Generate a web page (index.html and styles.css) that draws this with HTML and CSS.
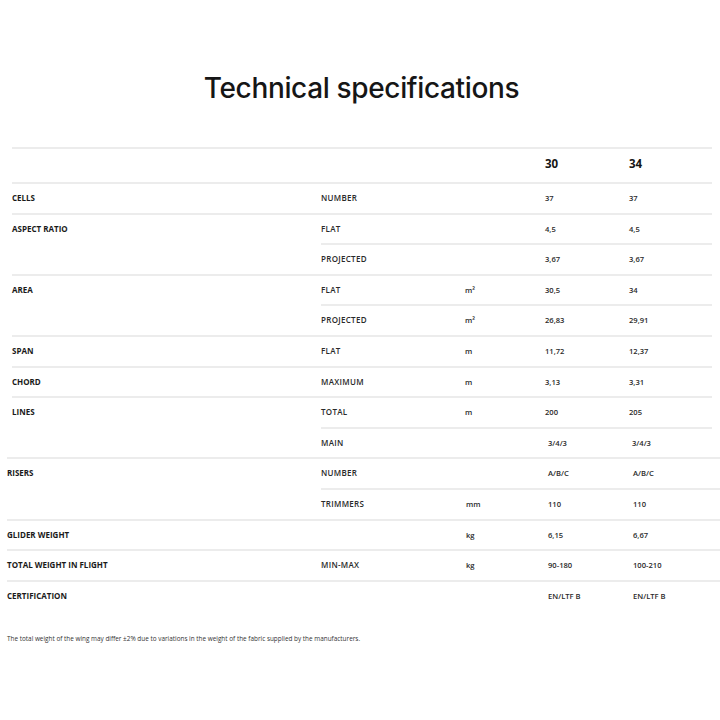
FILE: index.html
```html
<!DOCTYPE html>
<html>
<head>
<meta charset="utf-8">
<link rel="stylesheet" href="styles.css">
</head>
<body>
<main class="page">
  <h1 class="title">Technical specifications</h1>
  <table class="spec spec-a">
    <colgroup><col class="c1"><col class="c2"><col class="c3"><col class="c4"><col class="c5"></colgroup>
    <tr class="head"><td></td><td></td><td></td><td class="size">30</td><td class="size">34</td></tr>
    <tr class="grp"><td class="lbl">CELLS</td><td class="prm">NUMBER</td><td></td><td>37</td><td>37</td></tr>
    <tr class="grp"><td class="lbl" rowspan="2">ASPECT RATIO</td><td class="prm">FLAT</td><td></td><td>4,5</td><td>4,5</td></tr>
    <tr class="sub"><td class="prm">PROJECTED</td><td></td><td>3,67</td><td>3,67</td></tr>
    <tr class="grp"><td class="lbl" rowspan="2">AREA</td><td class="prm">FLAT</td><td>m²</td><td>30,5</td><td>34</td></tr>
    <tr class="sub"><td class="prm">PROJECTED</td><td>m²</td><td>26,83</td><td>29,91</td></tr>
    <tr class="grp"><td class="lbl">SPAN</td><td class="prm">FLAT</td><td>m</td><td>11,72</td><td>12,37</td></tr>
    <tr class="grp"><td class="lbl">CHORD</td><td class="prm">MAXIMUM</td><td>m</td><td>3,13</td><td>3,31</td></tr>
    <tr class="grp"><td class="lbl" rowspan="2">LINES</td><td class="prm">TOTAL</td><td>m</td><td>200</td><td>205</td></tr>
    <tr class="sub shift"><td class="prm">MAIN</td><td></td><td>3/4/3</td><td>3/4/3</td></tr>
  </table>
  <table class="spec spec-b">
    <colgroup><col class="c1"><col class="c2"><col class="c3"><col class="c4"><col class="c5"></colgroup>
    <tr class="grp"><td class="lbl" rowspan="2">RISERS</td><td class="prm">NUMBER</td><td></td><td>A/B/C</td><td>A/B/C</td></tr>
    <tr class="sub"><td class="prm">TRIMMERS</td><td>mm</td><td>110</td><td>110</td></tr>
    <tr class="grp"><td class="lbl">GLIDER WEIGHT</td><td></td><td>kg</td><td>6,15</td><td>6,67</td></tr>
    <tr class="grp"><td class="lbl">TOTAL WEIGHT IN FLIGHT</td><td class="prm">MIN-MAX</td><td>kg</td><td>90-180</td><td>100-210</td></tr>
    <tr class="grp last"><td class="lbl">CERTIFICATION</td><td></td><td></td><td>EN/LTF B</td><td>EN/LTF B</td></tr>
  </table>
  <p class="note">The total weight of the wing may differ ±2% due to variations in the weight of the fabric supplied by the manufacturers.</p>
</main>
</body>
</html>
```
FILE: styles.css
```css
html, body {
  margin: 0;
  padding: 0;
  background: #ffffff;
}
body {
  color: #1c1c1c;
  font-family: "Open Sans", "Liberation Sans", sans-serif;
}
.page {
  padding-top: 71px;
}
.title {
  margin: 0 0 42px;
  padding-left: 3px;
  text-align: center;
  font-family: Inter, "Liberation Sans", sans-serif;
  font-weight: 500;
  font-size: 28px;
  line-height: 34px;
  color: #161616;
  letter-spacing: -0.35px;
}
.spec {
  border-collapse: collapse;
  table-layout: fixed;
}
.spec td {
  padding: 0;
  vertical-align: top;
  font-size: 7.6px;
  font-weight: 600;
  line-height: 28.6px;
  color: #2a2a2a;
  white-space: nowrap;
}
.spec td.lbl {
  font-size: 8px;
  font-weight: 700;
  letter-spacing: 0;
  color: #1a1a1a;
}
.spec td.prm {
  font-size: 8px;
  letter-spacing: 0.3px;
}
.spec-a {
  width: 700px;
  margin-left: 12px;
  border-top: 2px solid #ececec;
}
.spec-a .c1 { width: 309px; }
.spec-a .c2 { width: 144px; }
.spec-a .c3 { width: 80px; }
.spec-a .c4 { width: 84px; }
.spec-a .c5 { width: 83px; }
.spec-b {
  width: 713px;
  margin-left: 7px;
  border-top: 2px solid #ececec;
}
.spec-b .c1 { width: 314px; }
.spec-b .c2 { width: 145px; }
.spec-b .c3 { width: 82px; }
.spec-b .c4 { width: 85px; }
.spec-b .c5 { width: 87px; }
.head td {
  line-height: 29px;
  padding-bottom: 4px;
}
.head td.size {
  font-size: 11.5px;
  font-weight: 700;
  color: #151515;
}
.grp td {
  border-top: 2px solid #ececec;
}
.spec-b tr:first-child td {
  border-top: none;
}
.sub td {
  border-top: 2px solid #ececec;
}
.shift td:nth-child(3),
.shift td:nth-child(4) {
  padding-left: 3px;
}
.note {
  margin: 24px 0 0 7px;
  font-size: 6.4px;
  line-height: 10px;
  color: #333;
  font-weight: 400;
}
```
